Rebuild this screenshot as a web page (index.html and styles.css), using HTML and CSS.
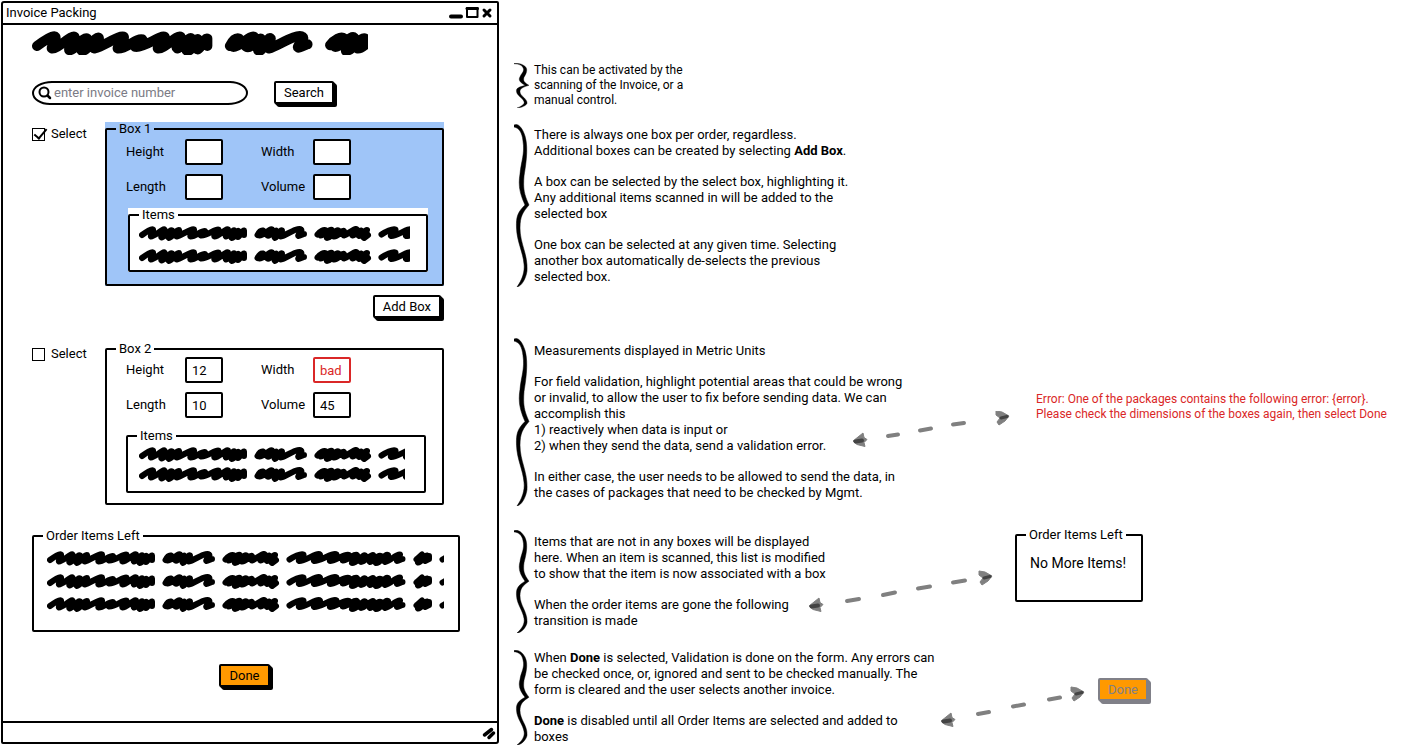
FILE: index.html
```html
<!DOCTYPE html>
<html lang="en">
<head>
<meta charset="utf-8">
<title>Invoice Packing</title>
<link rel="stylesheet" href="styles.css">
</head>
<body>
<svg class="defs" aria-hidden="true">
  <defs>
    <g id="scribble" fill="none" stroke="#000" stroke-width="6" stroke-linecap="round" stroke-linejoin="round">
      <path d="M3 9C7 6 13 2 14 3.500C15 5 11 10 12 10.500C15 11 24 2 25.500 3.500C26 5 21 11 22.500 11.500C25 12 31 3 33 4.500C34 6 28 11 30 12C33 12 38 3 40 4C41 6 36 10 37.500 10.500C43 9 53 2 55 3.500C56 6 50 10 51.500 10.500C56 11 63 4 66 5C68 7 60 9 62 9.500C68 10 77 2 79.500 3.500C80 6 74 10 75.500 10.500C79 11 87 2 89 3.500C90 5 85 9 87 10.500C90 10 94 3 95.500 4.500C96 6 91 11 93 12C96 12 98 4 99.500 5L99 11C101 11 103 4 105 4.500L105 9M88 8H104M24 8H38"/>
      <path d="M118.500 9C120 6 122 4 124 4.500L120.500 9.500C124 10 131 2 133 3.500C133 6 127 9 128.500 9.500C131 11 136 4 137 4.500C137 7 134 11 136 12C138 12 141 3 143 4.500C143 7 140 10 142 10.500C147 9 159 1 162 3.500C164 5 158 9 159.500 10C161 10 164 8 165 8M122 8H142"/>
      <path d="M178.500 8.500C181 5 185 3 187 4.500L181.500 9.500C185 10 191 2 193 4L188 12C192 12 197 3 199.500 4.500L195 10.500C199 11 203 3 205 5L205 9.500C208 9 216 1 218 3.500C219 6 212 9 213.500 9.500C216 10 220 4 222 4.500L220 10C223 10 226 3 228 4L225 12L229 9M183 8H204M214 8H228"/>
      <path d="M242.500 8.500C246 6 254 2 256.500 3.500C257 6 251 9 252 10C257 11 270 1 273 3.500C273 6 266 9 267 10C272 11 286 1 289.500 3.500C290 6 282 9 283 10C286 11 299 2 302 4C302 6 294 9 296 9.500C300 10 308 2 310 4L305 12C310 12 316 3 318 4.500L314 11C318 11 324 3 326 4L323 11C326 11 331 3 334 5L329 12C334 12 338 2 341 4L338 11C344 10 350 2 353 3.500C354 5 349 9 350 10C352 10 354 8 355.500 8M303 8H338"/>
      <path d="M369.500 8.500L375 3.500L371 11.500C374 12 378 4 380 4.500L378 10L382 8L382 5M370 8H382"/>
      <path d="M395.500 8.500L404 3.500"/>
    </g>
    <symbol id="brace" viewBox="0 0 16 163" preserveAspectRatio="none">
      <path stroke="#000" stroke-width=".5" d="M0 1C4 -1 8 3 11 12C15 25 11 45 10 52C9 65 10 70 15 81C9 88 6 92 6 104C6 120 14 130 13 147C12 154 8 162 3 163C8 156 11 148 10 140C9 128 3 118 2.500 104C2 92 4 88 11 81C6 70 4 62 6 50C7 38 11 30 9 17C8 8 5 4 0 3Z"/>
    </symbol>
    <g id="head-left">
      <path fill="#808080" stroke="#808080" stroke-linejoin="round" d="M0 9L10 1L11 5.500L14 7.500L11 10.500L12 14.500L4 12.500Z"/>
      <path stroke="#444" stroke-width="4" stroke-linecap="round" d="M2.500 9.500L9 8.500"/>
    </g>
    <g id="head-right">
      <path fill="#808080" stroke="#808080" stroke-linejoin="round" d="M0 0L6 1L13 5L9 10L3 14L1 11L4 7L0 4Z"/>
      <path stroke="#444" stroke-width="3" stroke-linecap="round" d="M5 7L11 5.500"/>
    </g>
  </defs>
</svg>

<div class="page">
  <main class="window">
    <header class="titlebar">
      <h1 class="title">Invoice Packing</h1>
      <svg class="window-icons" width="44" height="14" aria-hidden="true">
        <path d="M2 10.500H12" stroke="#000" stroke-width="4" stroke-linecap="round"/>
        <path d="M18 2V11H28.500V2Z" fill="none" stroke="#000" stroke-width="2" stroke-linejoin="round"/>
        <path d="M18 2.500H28.500" stroke="#000" stroke-width="3" stroke-linecap="round"/>
        <path d="M35 4L41 10M41 4L35 10" stroke="#000" stroke-width="3" stroke-linecap="round"/>
      </svg>
    </header>

    <form class="content">
      <svg class="heading-scribble" aria-hidden="true"><g transform="scale(1.67)"><use href="#scribble"/></g></svg>

      <div class="search-row">
        <label class="search">
          <svg width="14" height="14" aria-hidden="true"><circle cx="6" cy="6" r="4.500" fill="none" stroke="#000" stroke-width="2"/><path d="M9.500 9.500L12 12" stroke="#000" stroke-width="2.500" stroke-linecap="round"/></svg>
          <input class="search-input" type="text" placeholder="enter invoice number" aria-label="Invoice number">
        </label>
        <button class="button" type="button">Search</button>
      </div>

      <section class="box-row">
        <label class="select"><input class="check" type="checkbox" checked>Select</label>
        <div class="group-area selected">
          <fieldset class="group box">
            <legend>Box 1</legend>
            <div class="fields">
              <label class="field">Height<input class="value" type="text"></label>
              <label class="field">Width<input class="value" type="text"></label>
              <label class="field">Length<input class="value" type="text"></label>
              <label class="field">Volume<input class="value" type="text"></label>
            </div>
            <div class="group-area items">
              <fieldset class="group lines">
                <legend>Items</legend>
                <svg class="line" aria-hidden="true"><use href="#scribble"/></svg>
                <svg class="line" aria-hidden="true"><use href="#scribble"/></svg>
              </fieldset>
            </div>
          </fieldset>
        </div>
      </section>

      <div class="add-row"><button class="button" type="button">Add Box</button></div>

      <section class="box-row">
        <label class="select"><input class="check" type="checkbox">Select</label>
        <div class="group-area">
          <fieldset class="group box plain">
            <legend>Box 2</legend>
            <div class="fields">
              <label class="field">Height<input class="value" type="text" value="12"></label>
              <label class="field">Width<input class="value invalid" type="text" value="bad" aria-invalid="true"></label>
              <label class="field">Length<input class="value" type="text" value="10"></label>
              <label class="field">Volume<input class="value" type="text" value="45"></label>
            </div>
            <div class="group-area items">
              <fieldset class="group lines">
                <legend>Items</legend>
                <svg class="line" aria-hidden="true"><use href="#scribble"/></svg>
                <svg class="line" aria-hidden="true"><use href="#scribble"/></svg>
              </fieldset>
            </div>
          </fieldset>
        </div>
      </section>

      <fieldset class="group lines order">
        <legend>Order Items Left</legend>
        <svg class="line" aria-hidden="true"><use href="#scribble"/></svg>
        <svg class="line" aria-hidden="true"><use href="#scribble"/></svg>
        <svg class="line" aria-hidden="true"><use href="#scribble"/></svg>
      </fieldset>

      <div class="done-row"><button class="button done" type="button">Done</button></div>
    </form>

    <footer class="statusbar">
      <svg width="14" height="14" aria-hidden="true"><path d="M2.500 9L9.500 3.500M7 11.500L11.500 7" stroke="#000" stroke-width="3.500" stroke-linecap="round"/></svg>
    </footer>
  </main>

  <aside class="notes">
    <section class="note note-search">
      <svg class="brace" aria-hidden="true"><use href="#brace"/></svg>
      <div class="text small">
        <p>This can be activated by the<br>scanning of the Invoice, or a<br>manual control.</p>
      </div>
    </section>

    <section class="note note-box">
      <svg class="brace" aria-hidden="true"><use href="#brace"/></svg>
      <div class="text">
        <p>There is always one box per order, regardless.<br>Additional boxes can be created by selecting <b>Add Box</b>.</p>
        <p>A box can be selected by the select box, highlighting it.<br>Any additional items scanned in will be added to the<br>selected box</p>
        <p>One box can be selected at any given time. Selecting<br>another box automatically de-selects the previous<br>selected box.</p>
      </div>
    </section>

    <section class="note note-measure">
      <svg class="brace" aria-hidden="true"><use href="#brace"/></svg>
      <div class="text">
        <p>Measurements displayed in Metric Units</p>
        <p>For field validation, highlight potential areas that could be wrong<br>or invalid, to allow the user to fix before sending data. We can<br>accomplish this<br>1) reactively when data is input or<br>2) when they send the data, send a validation error.</p>
        <p>In either case, the user needs to be allowed to send the data, in<br>the cases of packages that need to be checked by Mgmt.</p>
      </div>
      <svg class="arrow" width="160" height="40" aria-hidden="true">
        <path d="M36 25L46 23.500M68 19.500L79 17.500M101 13.500L112 12" stroke="#808080" stroke-width="4" stroke-linecap="round"/>
        <use href="#head-left" x="1" y="21"/><use href="#head-right" x="144" y="0"/>
      </svg>
      <p class="error">Error: One of the packages contains the following error: {error}.<br>Please check the dimensions of the boxes again, then select Done</p>
    </section>

    <section class="note note-order">
      <svg class="brace" aria-hidden="true"><use href="#brace"/></svg>
      <div class="text">
        <p>Items that are not in any boxes will be displayed<br>here. When an item is scanned, this list is modified<br>to show that the item is now associated with a box</p>
        <p>When the order items are gone the following<br>transition is made</p>
      </div>
      <svg class="arrow" width="190" height="46" aria-hidden="true">
        <path d="M39 31L51 29M75 25L87 22.500M110 18.500L122 16.500M145 12.500L157 10.500" stroke="#808080" stroke-width="4" stroke-linecap="round"/>
        <use href="#head-left" x="1" y="27"/><use href="#head-right" x="171" y="1"/>
      </svg>
      <fieldset class="group empty">
        <legend>Order Items Left</legend>
        <p>No More Items!</p>
      </fieldset>
    </section>

    <section class="note note-done">
      <svg class="brace" aria-hidden="true"><use href="#brace"/></svg>
      <div class="text">
        <p>When <b>Done</b> is selected, Validation is done on the form. Any errors can<br>be checked once, or, ignored and sent to be checked manually. The<br>form is cleared and the user selects another invoice.</p>
        <p><b>Done</b> is disabled until all Order Items are selected and added to<br>boxes</p>
      </div>
      <svg class="arrow" width="150" height="44" aria-hidden="true">
        <path d="M38 28L49 26M73 20.500L84 18.500M109 13.500L120 11.500" stroke="#808080" stroke-width="4" stroke-linecap="round"/>
        <use href="#head-left" x="1" y="26"/><use href="#head-right" x="131" y="1"/>
      </svg>
      <button class="button done disabled-done" type="button" disabled>Done</button>
    </section>
  </aside>
</div>
</body>
</html>
```
FILE: styles.css
```css
* { box-sizing: border-box; }

body {
  margin: 0;
  background: #fff;
  color: #000;
  font: 13px/14px Roboto, "Liberation Sans", sans-serif;
}

p, h1 { margin: 0; }

svg { display: block; flex: none; }

.defs { position: absolute; width: 0; height: 0; }

.page {
  display: flex;
  align-items: flex-start;
  padding: 1px;
}

/* Application window */
.window {
  flex: none;
  width: 498px;
  border: 2px solid #000;
  border-radius: 3px 2px 3px 2px;
}

.titlebar {
  display: flex;
  align-items: center;
  justify-content: space-between;
  height: 22px;
  padding: 0 4px 0 3px;
  border-bottom: 2px solid #000;
}

.title { font-size: 13px; font-weight: 400; }

.content { padding: 6px 37px 31px 29px; }

.heading-scribble { width: 336px; height: 24px; overflow: hidden; }

.search-row {
  display: flex;
  gap: 26px;
  margin-top: 26px;
}

.search {
  display: flex;
  align-items: center;
  gap: 2px;
  width: 216px;
  height: 24px;
  padding: 0 12px 0 4px;
  border: 2px solid #000;
  border-radius: 20px 18px 20px 18px / 12px;
}

.search-input {
  flex: 1;
  min-width: 0;
  padding: 0;
  border: 0;
  outline: 0;
  background: none;
  font: inherit;
}

.search-input::placeholder { color: #7b7b85; opacity: 1; }

.button {
  height: 23px;
  margin: 0 3px 3px 0;
  padding: 0 8px;
  border: 2px solid #000;
  border-radius: 2px;
  background: #fff;
  box-shadow: 1px 1px #000, 2px 2px #000, 3px 3px #000;
  color: #000;
  font: inherit;
}

.done { background: #f90; }

.done:disabled {
  border-color: #808088;
  box-shadow: 1px 1px #808088, 2px 2px #808088, 3px 3px #808088;
  color: #808088;
}

.box-row {
  display: grid;
  grid-template-columns: 73px 1fr;
  align-items: start;
  margin: 15px 16px 0 0;
}

.select {
  display: flex;
  align-items: center;
  gap: 6px;
  padding-top: 5px;
}

.check {
  appearance: none;
  position: relative;
  width: 13px;
  height: 13px;
  margin: 0;
  border: 1px solid #000;
}

.check:checked::after {
  content: "";
  position: absolute;
  left: 4px;
  top: -3px;
  width: 5px;
  height: 11px;
  border: solid #000;
  border-width: 0 2px 2px 0;
  transform: rotate(40deg);
}

.selected { background: #9fc5f8; }

.group {
  --inset: 0px;
  min-width: 0;
  margin: 0;
  padding: 0 0 0 var(--inset);
  border: 2px solid #000;
  border-radius: 2px;
}

.group > legend {
  margin-left: calc(9px - var(--inset));
  padding: 0 3px;
  line-height: 14px;
}

.box { --inset: 19px; padding: 3px 14px 12px var(--inset); }

.box.plain { padding: 1px 16px 10px var(--inset); }

.fields {
  display: grid;
  grid-template-columns: 97px 90px;
  gap: 9px 38px;
}

.field {
  display: flex;
  align-items: center;
  justify-content: space-between;
}

.value {
  width: 38px;
  height: 26px;
  padding: 0 5px;
  border: 2px solid #000;
  border-radius: 2px;
  background: #fff;
  font: inherit;
}

.invalid { border-color: #da2727; color: #da2727; }

.items { margin: 8px 0 0 2px; background: #fff; }

.plain .items { margin: 11px 0 0; }

.lines { --inset: 9px; padding: 4px 16px 6px var(--inset); }

.plain .lines { --inset: 11px; padding: 4px 19px 9px var(--inset); }

.line { width: 100%; height: 15px; overflow: hidden; }

.line + .line { margin-top: 8px; }

.plain .line + .line { margin-top: 5px; }

.add-row {
  display: flex;
  justify-content: flex-end;
  margin: 9px 16px 21px 0;
}

.add-row + .box-row { margin-top: 0; }

.order { --inset: 13px; margin-top: 24px; padding: 8px 14px 18px var(--inset); }

.done-row {
  display: flex;
  justify-content: center;
  margin-top: 32px;
}

.statusbar {
  display: flex;
  align-items: center;
  justify-content: flex-end;
  height: 21px;
  padding-right: 1px;
  border-top: 2px solid #000;
}

/* Annotations */
.notes {
  flex: 1;
  min-width: 0;
  padding: 62px 0 0 15px;
}

.note {
  position: relative;
  display: grid;
  grid-template-columns: 20px auto 1fr;
  align-items: start;
}

.brace { position: absolute; left: 0; top: 0; width: 16px; height: 100%; }

.text {
  grid-column: 2;
  line-height: 16px;
  white-space: nowrap;
}

.text p + p { margin-top: 15px; }

.small { font-size: 12px; line-height: 15px; }

.arrow { position: absolute; }

.note-box { margin-top: 16px; padding: 3px 0 2px; }

.note-measure {
  grid-template-columns: 20px 502px 1fr;
  margin-top: 51px;
  padding: 5px 0;
}

.note-measure .arrow { left: 338px; top: 73px; }

.error {
  margin-top: 49px;
  color: #da2727;
  font-size: 12px;
  line-height: 15px;
  white-space: nowrap;
}

.note-order {
  grid-template-columns: 20px 481px 128px;
  margin-top: 24px;
  padding: 4px 0;
}

.note-order .arrow { left: 294px; top: 40px; }

.empty { height: 74px; margin-top: -6px; }

.empty p { padding: 14px 0 0 13px; font-size: 14px; }

.note-done {
  grid-template-columns: 20px 564px 1fr;
  justify-items: start;
  margin-top: 17px;
}

.note-done .arrow { left: 426px; top: 36px; }

.disabled-done { margin-top: 28px; }
```
